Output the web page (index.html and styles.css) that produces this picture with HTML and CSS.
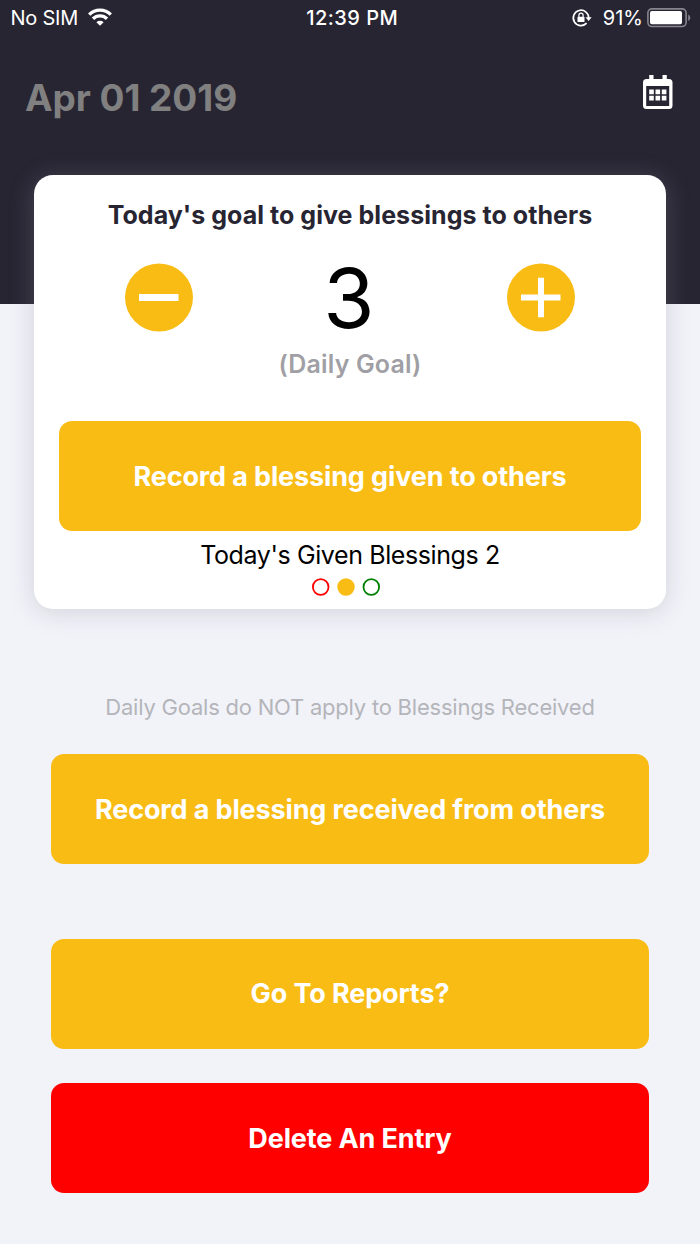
FILE: index.html
```html
<!DOCTYPE html>
<html lang="en">
<head>
<meta charset="utf-8">
<title>Daily Blessings</title>
<link rel="stylesheet" href="styles.css">
</head>
<body>
<header class="header">
  <div class="status">
    <div class="status-side">
      <span class="carrier">No SIM</span>
      <svg class="wifi" width="24" height="18" viewBox="0 0 24 18"><g fill="none" stroke="#fff" stroke-width="3.4"><path d="M1.2 6.6a15.3 15.3 0 0 1 21.6 0"/><path d="M5 10.8a9.9 9.9 0 0 1 14 0"/></g><path d="M8.4 14.2a5.1 5.1 0 0 1 7.2 0L12 17.8z" fill="#fff"/></svg>
    </div>
    <span class="clock">12:39 PM</span>
    <div class="status-side status-right">
      <svg class="lock" width="20" height="18" viewBox="0 0 20 18"><path d="M14.6 14.2A7.7 7.7 0 1 1 16.7 9" fill="none" stroke="#fff" stroke-width="1.7"/><path d="M13.5 8.2h6.2l-3.1 3.8z" fill="#fff"/><rect x="5.5" y="7.7" width="7" height="5.4" rx=".7" fill="#fff"/><path d="M6.9 8V6.2a2.1 2.1 0 0 1 4.2 0V8" fill="none" stroke="#fff" stroke-width="1.2"/></svg>
      <span class="percent">91%</span>
      <svg class="battery" width="44" height="20" viewBox="0 0 44 20"><rect x=".9" y=".9" width="38.2" height="17.6" rx="4" fill="none" stroke="#86848c" stroke-width="1.6"/><rect x="3" y="3.1" width="32" height="13.2" rx="1.8" fill="#fff"/><path d="M41.2 6.5q2.1.8 2.1 3.2t-2.1 3.2z" fill="#86848c"/></svg>
    </div>
  </div>
  <div class="date-row">
    <h1 class="date">Apr 01 2019</h1>
    <svg class="calendar" width="30" height="34" viewBox="0 0 30 34"><path fill="#fff" fill-rule="evenodd" d="M6.2 0h4.3v4h9V0h4.3v4H26a3.5 3.5 0 0 1 3.5 3.5v23A3.5 3.5 0 0 1 26 34H3.5A3.5 3.5 0 0 1 0 30.5v-23A3.5 3.5 0 0 1 3.5 4h2.7zM3.2 11v20h23V11z"/><path fill="#fff" d="M6.2 14.6h4.6v4.6H6.2zm6.3 0h4.6v4.6h-4.6zm6.3 0h4.6v4.6h-4.6zM6.2 20.8h4.6v4.6H6.2zm6.3 0h4.6v4.6h-4.6zm6.3 0h4.6v4.6h-4.6z"/></svg>
  </div>
</header>
<main class="main">
  <section class="card">
    <h2 class="goal-title">Today's goal to give blessings to others</h2>
    <div class="stepper">
      <button class="step" aria-label="Decrease"><svg width="68" height="68" viewBox="0 0 68 68"><circle cx="34" cy="33.5" r="34" fill="#f9bc15"/><path d="M14 33.5h39.5" stroke="#fff" stroke-width="7"/></svg></button>
      <span class="count">3</span>
      <button class="step" aria-label="Increase"><svg width="68" height="68" viewBox="0 0 68 68"><circle cx="34" cy="33.5" r="34" fill="#f9bc15"/><path d="M14 33.5h39.5M34 13.7v39.5" stroke="#fff" stroke-width="6"/></svg></button>
    </div>
    <p class="goal-label">(Daily Goal)</p>
    <button class="btn btn-given">Record a blessing given to others</button>
    <p class="given">Today's Given Blessings 2</p>
    <svg class="dots" width="68" height="18" viewBox="0 0 68 18"><g stroke-width="1.8"><circle cx="8.7" cy="9" r="7.8" fill="none" stroke="#f00"/><circle cx="34" cy="9" r="7.8" fill="#f9bc15" stroke="#f9bc15"/><circle cx="59.3" cy="9" r="7.8" fill="none" stroke="#008000"/></g></svg>
  </section>
  <p class="note">Daily Goals do NOT apply to Blessings Received</p>
  <div class="actions">
    <button class="btn btn-received">Record a blessing received from others</button>
    <button class="btn btn-reports">Go To Reports?</button>
    <button class="btn btn-delete">Delete An Entry</button>
  </div>
</main>
</body>
</html>
```
FILE: styles.css
```css
* { box-sizing: border-box; }
body {
  margin: 0;
  height: 1244px;
  overflow: hidden;
  background: #f2f3f9;
  font-family: Inter, "Liberation Sans", sans-serif;
  color: #000;
}
h1, h2, p { margin: 0; white-space: nowrap; }
svg { display: block; flex: none; overflow: visible; }
button { border: 0; padding: 0; background: none; font-family: inherit; }
.header { height: 304px; background: #282533; color: #fff; }
.status {
  display: grid;
  grid-template-columns: 1fr auto 1fr;
  align-items: center;
  height: 36px;
  padding: 0 9px 0 10.5px;
  font-size: 20px;
  line-height: 24px;
  white-space: nowrap;
}
.status-side { display: flex; align-items: center; }
.status-right { justify-content: flex-end; }
.carrier { letter-spacing: -0.25px; }
.wifi { margin-left: 10px; margin-top: -2px; }
.clock { font-weight: 500; letter-spacing: 0.45px; padding-left: 3px; }
.lock { margin-right: 11px; }
.percent { margin-right: 4px; }
.battery { margin-top: -1px; }
.date-row {
  display: flex;
  justify-content: space-between;
  align-items: flex-start;
  padding: 39px 27px 0 25px;
}
.date { font-size: 37px; line-height: 46px; font-weight: 700; letter-spacing: -0.05px; color: #808080; }
.main { display: flex; flex-direction: column; align-items: center; }
.card {
  width: 632px;
  height: 434.5px;
  margin-top: -129.5px;
  padding: 24px 25px 0;
  border-radius: 19px;
  background: #fff;
  box-shadow: 0 3px 24px rgba(143, 141, 155, 0.32);
  text-align: center;
}
.goal-title { font-size: 25px; line-height: 32px; font-weight: 700; letter-spacing: 0.05px; color: #282533; }
.stepper {
  display: grid;
  grid-template-columns: 68px 1fr 68px;
  align-items: center;
  height: 68px;
  margin: 33.5px 66px 0;
}
.count { font-size: 83px; line-height: 68px; padding-right: 2px; }
.goal-label { margin-top: 16px; font-size: 25px; line-height: 32px; font-weight: 600; letter-spacing: 0.15px; color: #a09fa5; }
.btn {
  display: block;
  width: 598px;
  height: 110px;
  padding-top: 1px;
  border-radius: 13px;
  background: #f9bc15;
  color: #fff;
  font-size: 27px;
  font-weight: 700;
  letter-spacing: -0.13px;
  white-space: nowrap;
}
.btn-given { width: 582px; margin-top: 40.5px; }
.given { margin-top: 8px; font-size: 25px; line-height: 32px; letter-spacing: -0.4px; }
.dots { margin: 7px auto 0; padding-right: 0; translate: -4px 0; }
.note { margin-top: 82px; font-size: 22px; line-height: 32px; letter-spacing: -0.22px; color: #b4b5ba; }
.actions { display: flex; flex-direction: column; margin-top: 31px; }
.btn-reports { margin-top: 74.5px; padding-top: 0; }
.btn-delete { margin-top: 34px; background: red; }
```
